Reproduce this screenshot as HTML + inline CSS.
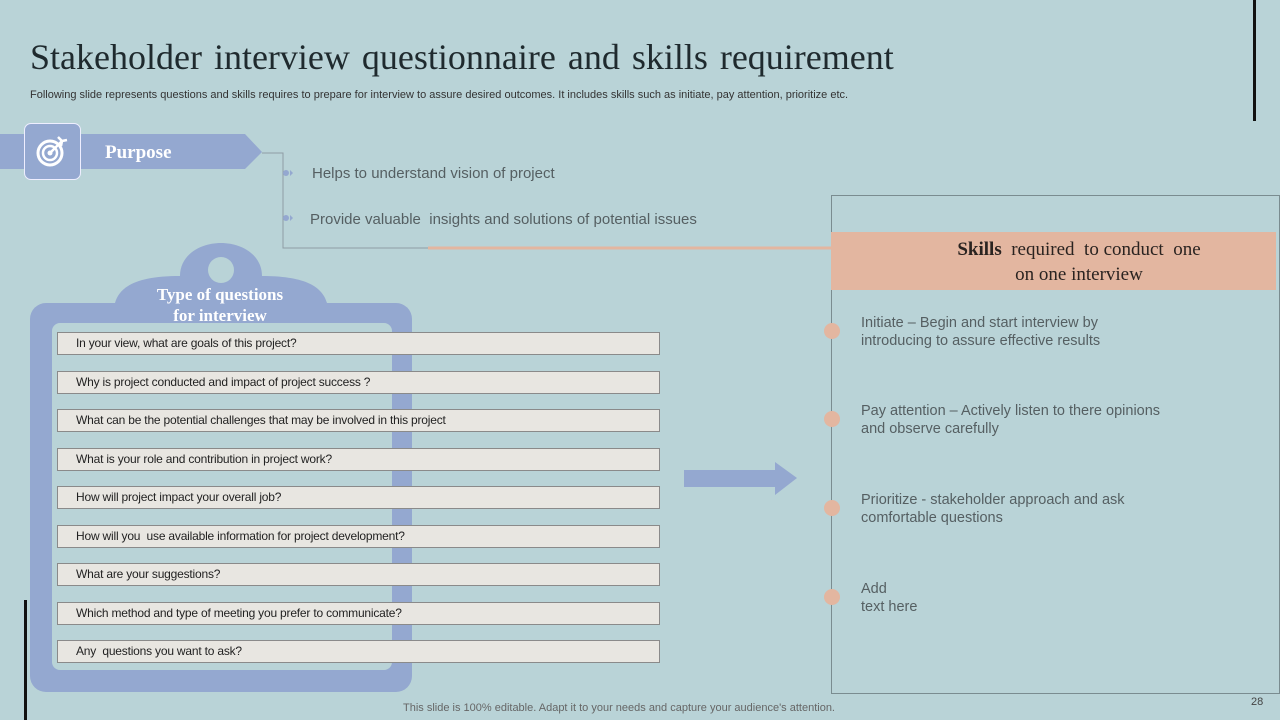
<!DOCTYPE html><html><head><style>
body{margin:0;width:1280px;height:720px;background:#b9d3d7;position:relative;overflow:hidden;font-family:"Liberation Sans",sans-serif}
.a{position:absolute}
.row{position:absolute;left:57px;background:#e8e6e1;border:1px solid #8a8a8a;font-size:12px;color:#222;line-height:21px;padding-left:18px;box-sizing:border-box;width:603px;height:23px;letter-spacing:-0.2px}
.sk{position:absolute;left:861px;font-size:14.5px;color:#555f62;line-height:18px}
.dot{position:absolute;left:824px;width:16px;height:16px;border-radius:50%;background:#e3b6a0}
</style></head><body>
<div class="a" style="left:30px;top:36px;font-family:'Liberation Serif',serif;font-size:36px;color:#1f2a2e;word-spacing:3px">Stakeholder interview questionnaire and skills requirement</div>
<div class="a" style="left:30px;top:89px;font-size:11px;color:#333">Following slide represents questions and skills requires to prepare for interview to assure desired outcomes. It includes skills such as initiate, pay attention, prioritize etc.</div>
<div class="a" style="left:1253px;top:0;width:3px;height:121px;background:#111"></div>
<div class="a" style="left:24px;top:600px;width:3px;height:120px;background:#111"></div>
<svg class="a" style="left:0;top:0" width="1280" height="720">
<polygon points="0,134 245,134 262,152 245,169 0,169" fill="#94a8d0"/>
<polyline points="262,153 283,153 283,248 428,248" fill="none" stroke="#8f9ca4" stroke-width="1"/>
<line x1="428" y1="248" x2="832" y2="248" stroke="#e3b6a0" stroke-width="3"/>
<circle cx="286" cy="173" r="3" fill="#94a8d0"/><polygon points="290,170 293,173 290,176" fill="#94a8d0"/>
<circle cx="286" cy="218" r="3" fill="#94a8d0"/><polygon points="290,215 293,218 290,221" fill="#94a8d0"/>
<rect x="831.5" y="195.5" width="448" height="498" fill="none" stroke="#7a8c90"/>
<rect x="831" y="232" width="445" height="58" fill="#e3b6a0"/>
<path d="M115,303 C120,285 140,276 180,276 C180,255 200,243 221,243 C242,243 262,255 262,276 C302,276 322,285 327,303 Z" fill="#94a8d0"/>
<circle cx="221" cy="270" r="13" fill="#b9d3d7"/>
<rect x="30" y="303" width="382" height="389" rx="16" fill="#94a8d0"/>
<rect x="52" y="323" width="340" height="347" rx="8" fill="#b9d3d7"/>
<polygon points="684,470 775,470 775,462 797,478 775,495 775,487 684,487" fill="#94a8d0"/>
</svg>
<div class="a" style="left:24px;top:123px;width:55px;height:55px;border-radius:7px;background:#94a8d0;border:1px solid #eef"></div>
<svg class="a" style="left:32px;top:131px" width="40" height="40" viewBox="0 0 40 40"><circle cx="18" cy="22" r="12" fill="none" stroke="#fff" stroke-width="3"/><circle cx="18" cy="22" r="7" fill="none" stroke="#fff" stroke-width="2.5"/><circle cx="18" cy="22" r="2.5" fill="#fff"/><path d="M18,22 L30,10 M26,6 L30,10 L35,9 M30,10 L29,15" stroke="#fff" stroke-width="2.5" fill="none"/></svg>
<div class="a" style="left:105px;top:142px;font-family:'Liberation Serif',serif;font-weight:bold;font-size:19px;color:#fff">Purpose</div>
<div class="a" style="left:312px;top:165px;font-size:15px;color:#555f62">Helps to understand vision of project</div>
<div class="a" style="left:310px;top:211px;font-size:15px;color:#555f62">Provide valuable&nbsp; insights and solutions of potential issues</div>
<div class="a" style="left:120px;top:284px;width:200px;text-align:center;font-family:'Liberation Serif',serif;font-weight:bold;font-size:17px;line-height:21px;color:#fff">Type of questions<br>for interview</div>
<div class="row" style="top:332px">In your view, what are goals of this project?</div>
<div class="row" style="top:371px">Why is project conducted and impact of project success ?</div>
<div class="row" style="top:409px">What can be the potential challenges that may be involved in this project</div>
<div class="row" style="top:448px">What is your role and contribution in project work?</div>
<div class="row" style="top:486px">How will project impact your overall job?</div>
<div class="row" style="top:525px">How will you&nbsp; use available information for project development?</div>
<div class="row" style="top:563px">What are your suggestions?</div>
<div class="row" style="top:602px">Which method and type of meeting you prefer to communicate?</div>
<div class="row" style="top:640px">Any&nbsp; questions you want to ask?</div>
<div class="a" style="left:831px;top:237px;width:496px;text-align:center;font-family:'Liberation Serif',serif;font-size:19px;line-height:25px;color:#2a2320"><b>Skills</b>&nbsp; required&nbsp; to conduct&nbsp; one<br>on one interview</div>
<div class="dot" style="top:323px"></div><div class="dot" style="top:411px"></div><div class="dot" style="top:500px"></div><div class="dot" style="top:589px"></div>
<div class="sk" style="top:314px">Initiate – Begin and start interview by<br>introducing to assure effective results</div>
<div class="sk" style="top:402px">Pay attention – Actively listen to there opinions<br>and observe carefully</div>
<div class="sk" style="top:491px">Prioritize - stakeholder approach and ask<br>comfortable questions</div>
<div class="sk" style="top:580px">Add<br>text here</div>
<div class="a" style="left:403px;top:702px;font-size:11px;color:#666">This slide is 100% editable. Adapt it to your needs and capture your audience's attention.</div>
<div class="a" style="left:1251px;top:696px;font-size:11px;color:#444">28</div>
</body></html>
